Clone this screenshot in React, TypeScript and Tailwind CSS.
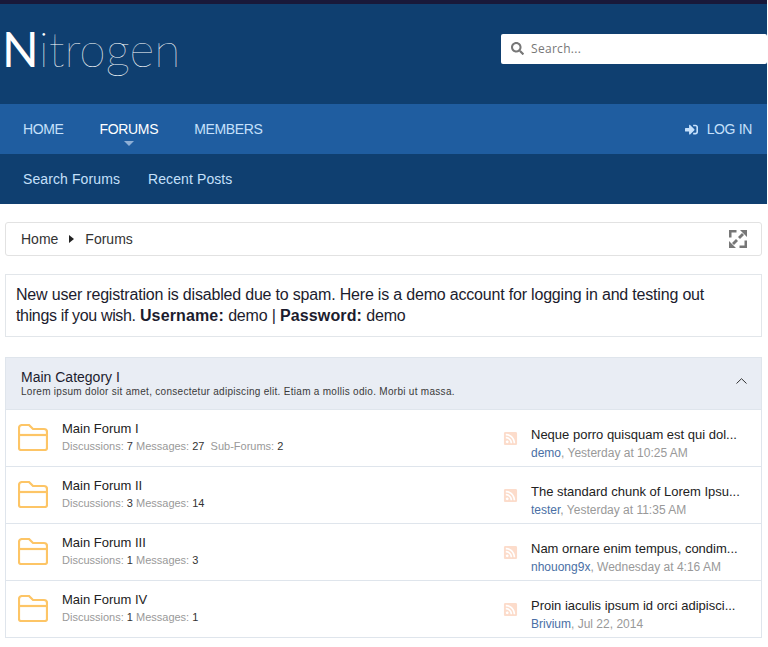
import React from "react";
import { FaSearch, FaRssSquare, FaSignInAlt } from "react-icons/fa";

const forums = [
  { name: "Main Forum I", d: 7, m: 27, sub: 2, title: "Neque porro quisquam est qui dol...", user: "demo", date: "Yesterday at 10:25 AM" },
  { name: "Main Forum II", d: 3, m: 14, title: "The standard chunk of Lorem Ipsu...", user: "tester", date: "Yesterday at 11:35 AM" },
  { name: "Main Forum III", d: 1, m: 3, title: "Nam ornare enim tempus, condim...", user: "nhouong9x", date: "Wednesday at 4:16 AM" },
  { name: "Main Forum IV", d: 1, m: 1, title: "Proin iaculis ipsum id orci adipisci...", user: "Brivium", date: "Jul 22, 2014" },
];

function Folder() {
  return (
    <svg width="30" height="27" viewBox="0 0 30 27" fill="none" stroke="#fdc566" strokeWidth="2.2" className="shrink-0 -mt-[1px]">
      <path d="M1 24V4a3 3 0 0 1 3-3h7l4 4h11a3 3 0 0 1 3 3v16a2 2 0 0 1-2 2H3a2 2 0 0 1-2-2z" />
      <path d="M1 11h28" />
    </svg>
  );
}

function Expand() {
  return (
    <svg width="18" height="18" viewBox="0 0 18 18" fill="#777">
      <path d="M0 0h7.5v2.5H2.5V7.5H0zM18 18h-7.5v-2.5h5v-5H18z" />
      <path d="M11 0h7v7zM13 3l2 2-4 4-2-2zM7 18H0v-7zM5 15l-2-2 4-4 2 2z" />
    </svg>
  );
}

export default function App() {
  return (
    <div className="w-[767px] h-[647px] overflow-hidden bg-white font-['Liberation_Sans',Arial,sans-serif] text-[#1c1c2e]">
      <header className="border-t-4 border-[#19193a] bg-[#0f3f70]">
        <div className="h-[100px] flex items-center justify-between pl-[2px]">
          <div className="font-['Lato',sans-serif] font-thin text-[48px] leading-none text-white -mt-[11px]">
            <span className="font-normal">N</span>itrogen
          </div>
          <div className="w-[266px] h-[30px] bg-white rounded-[2px] flex items-center pl-[10px] gap-[7px] -mt-[11px] font-['Open_Sans',sans-serif] text-[12px] tracking-[0.3px] text-[#777]">
            <FaSearch className="text-[13px] text-[#777]" />
            <span>Search...</span>
          </div>
        </div>
        <nav className="h-[50px] bg-[#1f5da0] flex items-center text-[14px] tracking-[-0.35px] text-[#c5e0fb] pl-[23px] pr-[15px]">
          <span className="mr-[36px]">HOME</span>
          <span className="relative mr-[36px] text-white">
            FORUMS
            <span className="absolute left-[24px] top-[22px] w-0 h-0 border-x-[5px] border-x-transparent border-t-[5px] border-t-[#8fb0d6]" />
          </span>
          <span>MEMBERS</span>
          <span className="ml-auto flex items-center gap-[9px]">
            <FaSignInAlt className="text-[13px]" />
            LOG IN
          </span>
        </nav>
        <div className="h-[50px] flex items-center gap-[28px] pl-[23px] text-[14px] tracking-[0.1px] text-[#c5e0fb]">
          <span>Search Forums</span>
          <span>Recent Posts</span>
        </div>
      </header>

      <main className="px-[5px] pt-[18px]">
        <div className="h-[34px] border border-[#e2e2e2] rounded-[3px] flex items-center pl-[15px] pr-[14px] text-[14px] text-[#333]">
          <span>Home</span>
          <span className="ml-[11px] mr-[11px] w-0 h-0 border-y-[4.5px] border-y-transparent border-l-[5px] border-l-[#222]" />
          <span>Forums</span>
          <span className="ml-auto"><Expand /></span>
        </div>

        <div className="mt-[18px] h-[63px] border border-[#e2e6ea] px-[10px] pt-[9px] text-[16px] tracking-[-0.19px] leading-[21px] text-[#1c1c2e]">
          New user registration is disabled due to spam. Here is a demo account for logging in and testing out
          <br />
          <span className="tracking-[-0.35px]">things if you wish.</span> <b className="tracking-[0.14px]">Username:</b> demo | <b className="tracking-[0.14px]">Password:</b> demo
        </div>

        <section className="mt-[20px] border border-[#dfe5ec]">
          <div className="h-[52px] bg-[#e9edf4] border-b border-[#dfe5ec] flex items-center justify-between pl-[15px] pr-[14px]">
            <div className="-mt-[2px]">
              <div className="text-[14px] leading-[16px]">Main Category I</div>
              <div className="text-[10px] leading-[11px] mt-[1px] text-[#3a3a3a] tracking-[0.29px]">
                Lorem ipsum dolor sit amet, consectetur adipiscing elit. Etiam a mollis odio. Morbi ut massa.
              </div>
            </div>
            <svg width="11" height="6" viewBox="0 0 11 6" fill="none" stroke="#333" className="-mt-[6px]">
              <path d="M0.5 5.5 5.5 0.7 10.5 5.5" />
            </svg>
          </div>
          {forums.map((f, i) => (
            <div key={f.name} className={`flex items-center pl-[12px] ${i ? "h-[57px] border-t border-[#dfe5ec]" : "h-[56px]"}`}>
              <Folder />
              <div className="ml-[14px] w-[441px] -mt-[3px]">
                <div className="text-[13px] leading-[16px] text-[#222]">{f.name}</div>
                <div className="text-[11px] leading-[14px] mt-[2px] text-[#999]">
                  Discussions: <span className="text-[#333]">{f.d}</span> Messages: <span className="text-[#333]">{f.m}</span>
                  {f.sub ? <>&nbsp; Sub-Forums: <span className="text-[#333]">{f.sub}</span></> : null}
                </div>
              </div>
              <FaRssSquare className="text-[15px] text-[#fcdccb] shrink-0" />
              <div className="ml-[13px] mt-[12px]">
                <div className="text-[13px] leading-[16px] text-[#222]">{f.title}</div>
                <div className="text-[12px] leading-[16px] mt-[2px] text-[#999]">
                  <span className="text-[#4a6fa5]">{f.user}</span>, {f.date}
                </div>
              </div>
            </div>
          ))}
        </section>
      </main>
    </div>
  );
}
